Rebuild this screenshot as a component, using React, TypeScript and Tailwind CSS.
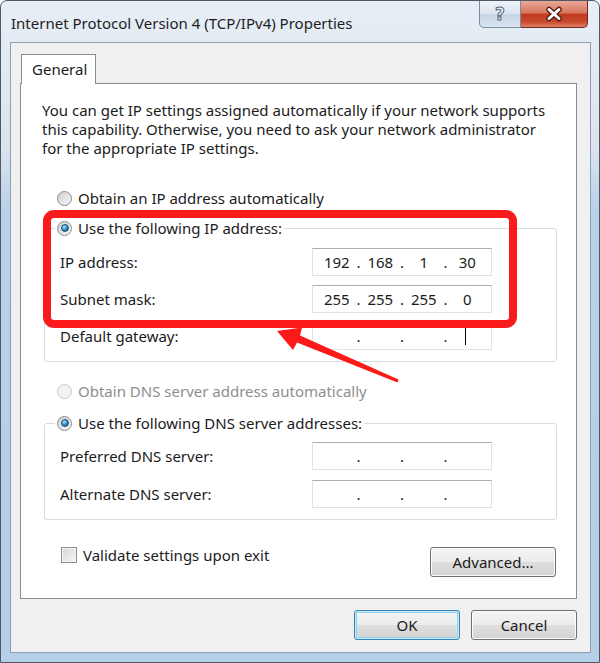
import { Fragment } from "react";

function Radio({ checked = false, disabled = false }: { checked?: boolean; disabled?: boolean }) {
  return (
    <span
      className={
        disabled
          ? "flex h-[15px] w-[15px] shrink-0 items-center justify-center rounded-full border border-[#cacaca] bg-[#f2f2f2]"
          : "flex h-[15px] w-[15px] shrink-0 items-center justify-center rounded-full border border-[#8a8a8a] bg-[linear-gradient(135deg,#d0d0d0,#f8f8f8)]"
      }
    >
      {checked && (
        <span className="h-[8px] w-[8px] rounded-full border border-[#1d4c74] bg-[radial-gradient(circle_at_35%_30%,#aee4fb,#2c89c9_55%,#15507f)]" />
      )}
    </span>
  );
}

function IpField({ parts = ["", "", "", ""], caret = false }: { parts?: string[]; caret?: boolean }) {
  return (
    <div className="flex h-[28px] w-[180px] shrink-0 items-center border border-[#dfe3e8] border-t-[#abadb3] bg-white px-[6px] text-[15px] text-[#1b1b1b]">
      {parts.map((p, i) => (
        <Fragment key={i}>
          <span className="flex w-[36px] items-center justify-center">
            {p}
            {caret && i === 3 && <span className="h-[17px] w-px -translate-x-[2px] bg-black" />}
          </span>
          {i < 3 && <span className="w-[8px] text-center">.</span>}
        </Fragment>
      ))}
    </div>
  );
}

function Row({ label, children }: { label: string; children: React.ReactNode }) {
  return (
    <div className="flex h-[28px] items-center justify-between pl-[5px]">
      <span>{label}</span>
      {children}
    </div>
  );
}

function WinButton({ label, width, focused = false }: { label: string; width: string; focused?: boolean }) {
  return (
    <button
      className={`${width} h-[30px] rounded-[3px] border text-[15px] text-[#1b1b1b] bg-[linear-gradient(180deg,#f4f4f4_0%,#ececec_48%,#dedede_52%,#d3d3d3_100%)] ${
        focused
          ? "border-[#3c7fb1] shadow-[inset_0_0_0_1px_#c4ebfb,inset_0_0_0_2px_#8fd3f2]"
          : "border-[#707070] shadow-[inset_0_0_0_1px_#fbfbfb]"
      }`}
    >
      {label}
    </button>
  );
}

export default function App() {
  return (
    <div className="relative h-[663px] w-[600px] overflow-hidden bg-white font-['Noto_Sans',sans-serif] text-[15px] text-[#1b1b1b]">
      <div className="flex h-[663px] w-[600px] flex-col rounded-t-[7px] border border-[#4f5864] bg-[linear-gradient(180deg,#e7eef6_0%,#dbe4ee_22%,#b8d0e9_32%,#b6cfe9_100%)] pb-[9px] pl-[9px] pr-[8px]">
        {/* title bar */}
        <div className="flex h-[41px] shrink-0 items-start justify-between">
          <span className="mt-[11px] pl-[1px] text-[15px] leading-[22px] text-[#1e1e1e]">
            Internet Protocol Version 4 (TCP/IPv4) Properties
          </span>
          <div className="mr-[3px] flex">
            <div className="flex h-[27px] w-[42px] items-center justify-center rounded-bl-[5px] border border-t-0 border-[#7b8ca1] bg-[linear-gradient(180deg,#eef3f9_0%,#dce6f1_48%,#c7d5e6_52%,#d9e4f0_100%)]">
              <span className="font-['DejaVu_Sans',sans-serif] text-[17px] font-bold leading-none text-[#f4f7fa] [-webkit-text-stroke:1px_#56677c]">?</span>
            </div>
            <div className="flex h-[27px] w-[67px] items-center justify-center rounded-br-[5px] border border-l-0 border-t-0 border-[#6e2b20] bg-[linear-gradient(180deg,#eaa899_0%,#d77761_45%,#c23a20_52%,#c84a2d_80%,#e07f68_100%)]">
              <svg width="20" height="16" viewBox="0 0 20 16">
                <path d="M5 3.5 L15 12.5 M15 3.5 L5 12.5" stroke="#4e1a10" strokeWidth="5.5" strokeLinecap="round" fill="none" />
                <path d="M5 3.5 L15 12.5 M15 3.5 L5 12.5" stroke="#ffffff" strokeWidth="3" strokeLinecap="round" fill="none" />
              </svg>
            </div>
          </div>
        </div>

        {/* client area */}
        <div className="flex flex-1 flex-col border border-[#8f9fb2] bg-[#f0f0f0] pl-[9px] pr-[13px] pt-[11px]">
          <div className="relative z-10 -mb-px ml-[1px] flex h-[30px] w-[75px] items-center border border-b-0 border-[#898c95] bg-white pl-[10px]">
            General
          </div>

          <div className="h-[516px] border border-[#898c95] bg-white pl-[21px] pr-[20px] pt-[17px]">
            <p className="leading-[19px]">
              You can get IP settings assigned automatically if your network supports
              <br />
              this capability. Otherwise, you need to ask your network administrator
              <br />
              for the appropriate IP settings.
            </p>

            <div className="ml-[15px] mt-[30px] flex h-[20px] items-center gap-[6px]">
              <Radio />
              <span>Obtain an IP address automatically</span>
            </div>

            <fieldset className="ml-[2px] mt-[10px] w-[513px] rounded-[3px] border border-[#d8dde2] pb-[11px] pl-[10px] pr-[64px]">
              <legend className="px-[2px]">
                <span className="flex h-[20px] items-center gap-[6px]">
                  <Radio checked />
                  <span>Use the following IP address:</span>
                </span>
              </legend>
              <div className="mt-[10px] flex flex-col gap-[9px]">
                <Row label="IP address:">
                  <IpField parts={["192", "168", "1", "30"]} />
                </Row>
                <Row label="Subnet mask:">
                  <IpField parts={["255", "255", "255", "0"]} />
                </Row>
                <Row label="Default gateway:">
                  <IpField caret />
                </Row>
              </div>
            </fieldset>

            <div className="ml-[15px] mt-[19px] flex h-[20px] items-center gap-[6px] text-[#8e8e8e]">
              <Radio disabled />
              <span>Obtain DNS server address automatically</span>
            </div>

            <fieldset className="ml-[2px] mt-[12px] w-[513px] rounded-[3px] border border-[#d8dde2] pb-[11px] pl-[10px] pr-[64px]">
              <legend className="px-[2px]">
                <span className="flex h-[20px] items-center gap-[6px]">
                  <Radio checked />
                  <span>Use the following DNS server addresses:</span>
                </span>
              </legend>
              <div className="mt-[9px] flex flex-col gap-[10px]">
                <Row label="Preferred DNS server:">
                  <IpField />
                </Row>
                <Row label="Alternate DNS server:">
                  <IpField />
                </Row>
              </div>
            </fieldset>

            <div className="mt-[25px] flex items-start justify-between pl-[19px]">
              <div className="flex h-[20px] items-center gap-[6px]">
                <span className="h-[16px] w-[16px] border border-[#8e8f8f] bg-[linear-gradient(135deg,#d6d6d6,#f7f7f7)] shadow-[inset_0_0_0_1px_#f4f4f4]" />
                <span>Validate settings upon exit</span>
              </div>
              <div className="mt-[2px]">
                <WinButton label="Advanced..." width="w-[126px]" />
              </div>
            </div>
          </div>

          <div className="mt-[11px] flex justify-end gap-[11px]">
            <WinButton label="OK" width="w-[106px]" focused />
            <WinButton label="Cancel" width="w-[106px]" />
          </div>
        </div>
      </div>

      {/* red annotation */}
      <svg className="pointer-events-none absolute left-0 top-0" width="600" height="663" viewBox="0 0 600 663">
        <rect x="47" y="214" width="466" height="110" rx="7" fill="none" stroke="#fb1a1a" strokeWidth="8" />
        <polygon
          points="277,331 302,327.5 300,335.5 398.5,379.5 397.5,382.5 297,342.5 293,350"
          fill="#fb1a1a"
        />
      </svg>
    </div>
  );
}
